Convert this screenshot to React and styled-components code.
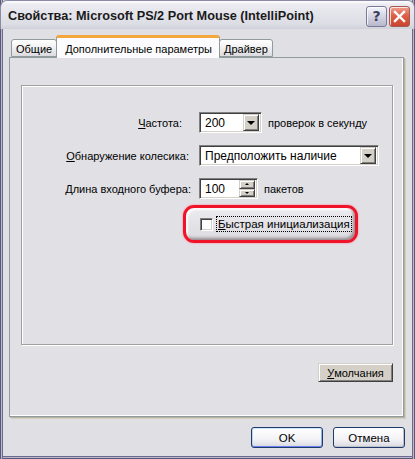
import React from "react";
import styled, { createGlobalStyle } from "styled-components";

const GlobalStyle = createGlobalStyle`
  html, body {
    margin: 0;
    padding: 0;
    background: #ffffff;
  }
  body {
    font-family: "Liberation Sans", Tahoma, sans-serif;
    font-size: 11px;
    color: #000000;
  }
`;

export default function App() {
    return (
        <>
            <GlobalStyle />
            <Window>
                <TitleBar>
                    <TitleText>Свойства: Microsoft PS/2 Port Mouse (IntelliPoint)</TitleText>
                    <TitleButtons>
                        <CaptionButton>?</CaptionButton>
                        <CaptionButton $close>
                            <svg width="13" height="13" viewBox="0 0 13 13">
                                <path d="M2 2 L11 11 M11 2 L2 11" stroke="#ffffff" strokeWidth="2.4" strokeLinecap="square" />
                            </svg>
                        </CaptionButton>
                    </TitleButtons>
                </TitleBar>

                <Body>
                    <TabRow>
                        <Tab>Общие</Tab>
                        <Tab $active>Дополнительные параметры</Tab>
                        <Tab>Драйвер</Tab>
                    </TabRow>

                    <TabPanel>
                        <GroupBox>
                            <FormGrid>
                                <Label $shift={7}><u>Ч</u>астота:</Label>
                                <ControlCell>
                                    <Combo $width={63}>
                                        <ComboText>200</ComboText>
                                        <DropButton><Arrow /></DropButton>
                                    </Combo>
                                    <Suffix>проверок в секунду</Suffix>
                                </ControlCell>

                                <Label><u>О</u>бнаружение колесика:</Label>
                                <ControlCell>
                                    <Combo $width={180}>
                                        <ComboText>Предположить наличие</ComboText>
                                        <DropButton><Arrow /></DropButton>
                                    </Combo>
                                </ControlCell>

                                <Label $shift={-2}><u>Д</u>лина входного буфера:</Label>
                                <ControlCell>
                                    <Spin>
                                        <ComboText>100</ComboText>
                                        <SpinButtons>
                                            <SpinButton><SmallArrow $up /></SpinButton>
                                            <SpinButton><SmallArrow /></SpinButton>
                                        </SpinButtons>
                                    </Spin>
                                    <Suffix>пакетов</Suffix>
                                </ControlCell>
                            </FormGrid>

                            <Highlight>
                                <CheckBox />
                                <CheckLabel><u>Б</u>ыстрая инициализация</CheckLabel>
                            </Highlight>
                        </GroupBox>

                        <DefaultsRow>
                            <ClassicButton><u>У</u>молчания</ClassicButton>
                        </DefaultsRow>
                    </TabPanel>

                    <ButtonRow>
                        <XpButton $default>OK</XpButton>
                        <XpButton>Отмена</XpButton>
                    </ButtonRow>
                </Body>
            </Window>
        </>
    );
}

const Window = styled.div`
    width: 415px;
    height: 459px;
    box-sizing: border-box;
    background: #e0dfe3;
    display: flex;
    flex-direction: column;
    box-shadow:
        inset 1px 0 0 #585779, inset 2px 0 0 #b9b8cc, inset 3px 0 0 #6b6a8c,
        inset -1px 0 0 #585779, inset -2px 0 0 #b9b8cc, inset -3px 0 0 #6b6a8c,
        inset 0 -1px 0 #585779, inset 0 -2px 0 #b9b8cc, inset 0 -3px 0 #6b6a8c;
`;

const TitleBar = styled.div`
    height: 29px;
    flex: none;
    box-sizing: border-box;
    display: flex;
    align-items: center;
    justify-content: space-between;
    padding: 2px 4px 0 7px;
    border-radius: 7px 7px 0 0;
    background: linear-gradient(#ffffff 0%, #ebebf1 12%, #e3e3ea 50%, #dcdce4 85%, #d0d0da 100%);
    border: 1px solid #8b8aa6;
    border-bottom: none;
`;

const TitleText = styled.div`
    font-family: "Liberation Sans", sans-serif;
    font-weight: bold;
    font-size: 12.7px;
    color: #1a1a1a;
    white-space: nowrap;
`;

const TitleButtons = styled.div`
    display: flex;
    gap: 2px;
`;

const CaptionButton = styled.div`
    width: 21px;
    height: 21px;
    box-sizing: border-box;
    border-radius: 3px;
    border: 1px solid ${(p) => (p.$close ? "#a25a52" : "#7a7a98")};
    box-shadow: inset 1px 1px 0 rgba(255, 255, 255, 0.75);
    background: ${(p) =>
        p.$close
            ? "linear-gradient(#f0a090, #df5f48 45%, #c9432e 100%)"
            : "linear-gradient(#f4f4fa, #d4d4e2 50%, #b8b8cc 100%)"};
    display: flex;
    align-items: center;
    justify-content: center;
    color: #3c3c5c;
    font-family: "DejaVu Sans", sans-serif;
    font-weight: bold;
    font-size: 14px;
`;

const Body = styled.div`
    flex: 1;
    display: flex;
    flex-direction: column;
    padding: 6px 11px 0 9px;
`;

const TabRow = styled.div`
    display: flex;
    align-items: flex-end;
    height: 23px;
    margin-left: 2px;
    margin-bottom: -1px;
    position: relative;
    z-index: 1;
`;

const Tab = styled.div`
    box-sizing: border-box;
    height: ${(p) => (p.$active ? 23 : 18)}px;
    margin-bottom: ${(p) => (p.$active ? 0 : 1)}px;
    padding: ${(p) => (p.$active ? "2px 7px 0 8px" : "1px 4px 0 4px")};
    border: 1px solid #919b9c;
    border-bottom: ${(p) => (p.$active ? "none" : "1px solid #919b9c")};
    border-radius: 3px 3px 0 0;
    background: ${(p) =>
        p.$active ? "#fcfcfe" : "linear-gradient(#ffffff, #f3f3f3 40%, #dcdce0 100%)"};
    border-top: ${(p) => (p.$active ? "3px solid #f4a73a" : "1px solid #919b9c")};
    ${(p) => (p.$active ? "margin-left: -1px; margin-right: -1px;" : "")}
    display: flex;
    align-items: center;
    white-space: nowrap;
    font-size: 11px;
`;

const TabPanel = styled.div`
    height: 360px;
    box-sizing: border-box;
    border: 1px solid #919b9c;
    background: #e1e0e5;
    box-shadow: 1px 1px 0 #b7b4a6, 2px 2px 0 #d2cfc2, inset -1px -1px 0 #ffffff;
    padding: 27px 10px 0 11px;
    display: flex;
    flex-direction: column;
`;

const GroupBox = styled.div`
    height: 260px;
    box-sizing: border-box;
    border: 1px solid #a0a0a0;
    box-shadow: inset 1px 1px 0 #ffffff, 1px 1px 0 #ffffff;
    padding: 26px 0 0 12px;
`;

const FormGrid = styled.div`
    display: grid;
    grid-template-columns: 165px auto;
    row-gap: 12px;
    align-items: center;
`;

const Label = styled.div`
    justify-self: end;
    margin-right: ${(p) => 10 + (p.$shift || 0)}px;
    white-space: nowrap;
`;

const ControlCell = styled.div`
    display: flex;
    align-items: center;
    gap: 6px;
`;

const Sunken = styled.div`
    height: 21px;
    box-sizing: border-box;
    background: #ffffff;
    border-top: 1px solid #808080;
    border-left: 1px solid #808080;
    border-right: 1px solid #ffffff;
    border-bottom: 1px solid #ffffff;
    box-shadow: inset 1px 1px 0 #404040, inset -1px -1px 0 #d4d0c8;
    display: flex;
    align-items: center;
    padding: 2px;
`;

const Combo = styled(Sunken)`
    width: ${(p) => p.$width}px;
`;

const Spin = styled(Sunken)`
    width: 59px;
`;

const ComboText = styled.div`
    flex: 1;
    padding-left: 3px;
    font-size: 12px;
    white-space: nowrap;
`;

const raised = `
    box-sizing: border-box;
    background: #d4d0c8;
    border-top: 1px solid #d4d0c8;
    border-left: 1px solid #d4d0c8;
    border-right: 1px solid #404040;
    border-bottom: 1px solid #404040;
    box-shadow: inset 1px 1px 0 #ffffff, inset -1px -1px 0 #808080;
`;

const DropButton = styled.div`
    ${raised}
    width: 16px;
    height: 17px;
    display: flex;
    align-items: center;
    justify-content: center;
`;

const Arrow = styled.div`
    width: 0;
    height: 0;
    border-left: 4px solid transparent;
    border-right: 4px solid transparent;
    border-top: 4px solid #000000;
    margin-top: 1px;
`;

const SpinButtons = styled.div`
    display: flex;
    flex-direction: column;
`;

const SpinButton = styled.div`
    ${raised}
    width: 16px;
    height: 8.5px;
    display: flex;
    align-items: center;
    justify-content: center;
`;

const SmallArrow = styled.div`
    width: 0;
    height: 0;
    border-left: 2px solid transparent;
    border-right: 2px solid transparent;
    ${(p) => (p.$up ? "border-bottom: 2px solid #000;" : "border-top: 2px solid #000;")}
`;

const Suffix = styled.div`
    white-space: nowrap;
`;

const Highlight = styled.div`
    margin: 6px 0 0 149px;
    width: 175px;
    height: 38px;
    box-sizing: border-box;
    border: 3px solid #f0142a;
    border-radius: 11px;
    box-shadow: 0 0 2px #ff7080, inset -2px -2px 3px rgba(60, 40, 40, 0.45), inset 2px 2px 2px rgba(255, 255, 255, 0.9);
    background: linear-gradient(#ecebef, #dcdbe0);
    display: flex;
    align-items: center;
    padding-left: 14px;
    gap: 3px;
`;

const CheckBox = styled.div`
    width: 13px;
    height: 13px;
    box-sizing: border-box;
    border: 1px solid #808080;
    border-right-color: #ffffff;
    border-bottom-color: #ffffff;
    box-shadow: inset 1px 1px 0 #404040, inset -1px -1px 0 #d4d0c8;
    background: #ffffff;
`;

const CheckLabel = styled.div`
    border: 1px dotted #000000;
    padding: 1px 1px;
    white-space: nowrap;
    font-size: 11.5px;
`;

const DefaultsRow = styled.div`
    display: flex;
    justify-content: flex-end;
    margin-top: 18px;
`;

const ClassicButton = styled.div`
    ${raised}
    width: 75px;
    height: 19px;
    display: flex;
    align-items: center;
    justify-content: center;
`;

const ButtonRow = styled.div`
    display: flex;
    justify-content: flex-end;
    gap: 10px;
    margin-top: 10px;
    margin-right: -1px;
`;

const XpButton = styled.div`
    width: 72px;
    height: 21px;
    box-sizing: border-box;
    border: 1px solid #1f3a6b;
    border-radius: 3px;
    background: linear-gradient(#ffffff, #f3f3f6 60%, #d8d8e0 100%);
    box-shadow: ${(p) =>
        p.$default
            ? "inset 0 1px 0 #cee7ff, inset 0 -1px 0 #6982ee, inset 1px 0 0 #bcd4f6, inset -1px 0 0 #89ade4"
            : "inset -1px -1px 0 #c0c0cc"};
    display: flex;
    align-items: center;
    justify-content: center;
    font-size: 11.5px;
`;
